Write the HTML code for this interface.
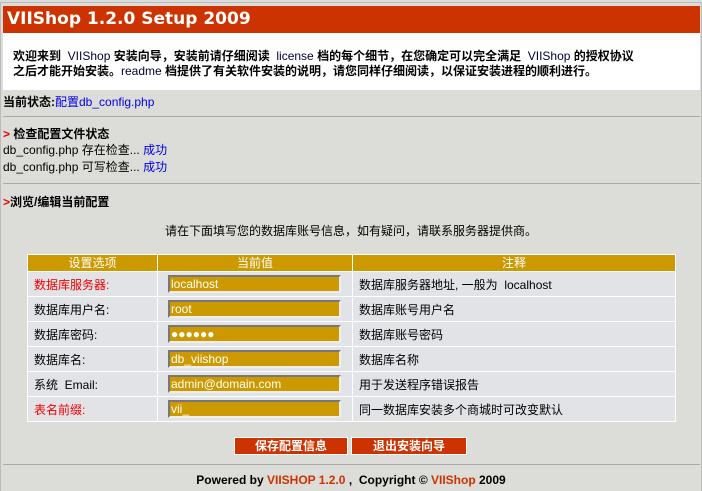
<!DOCTYPE html>
<html><head><meta charset="utf-8"><style>
*{margin:0;padding:0;box-sizing:border-box}
body{width:702px;height:491px;background:#dcdcd8;font-family:"Liberation Sans","Noto Sans CJK SC",sans-serif;font-size:12px;color:#000;position:relative;overflow:hidden}
.frame{position:absolute;left:0;top:2px;width:702px;height:489px;border:1px solid #bbb;border-bottom:none}
.hdr{position:absolute;left:3px;top:6px;width:697px;height:27px;background:#cc3300;color:#fff;font-weight:bold;font-size:17px;line-height:27px;padding-left:4px;font-family:"DejaVu Sans",sans-serif}
.intro{position:absolute;left:3px;top:33px;width:697px;height:57px;background:#fff;font-weight:bold;font-size:12px;line-height:15px;padding:16px 0 0 10px}
.intro .n{font-weight:normal;color:#003}
a{color:#0000ee;text-decoration:none}
.abs{position:absolute}
.hr{position:absolute;left:3px;width:697px;height:1px;background:#aaa}
.red{color:#e00;font-weight:bold}
table{position:absolute;left:27px;top:254px;border-collapse:collapse;width:649px}
td,th{border:1px solid #fff;height:25px;font-size:12px;padding:0}
th{background:#cc9900;color:#fff;font-weight:normal;height:17px;line-height:15px}
td{background:#e2e3e7}
td.l{padding-left:6px}
td.r{padding-left:6px}
.inp{margin-left:10px;width:173px;height:18px;background:#cc9900;border:2px solid;border-color:#777 #eee #eee #777;color:#fff;font-size:12px;line-height:14px;padding-left:1px}
.btn{position:absolute;top:437px;height:18px;background:#cc3300;color:#fff;font-weight:bold;text-align:center;line-height:17px;border:1px solid #fff;font-size:12px}
.foot{position:absolute;left:0;width:702px;top:473px;text-align:center;font-weight:bold;font-size:12px}
.foot span{color:#cc3300}
</style></head><body>
<div class="frame"></div>
<div class="hdr">VIIShop 1.2.0 Setup 2009</div>
<div class="intro">欢迎来到 <span class="n">&nbsp;VIIShop</span> 安装向导，安装前请仔细阅读 <span class="n">&nbsp;license</span> 档的每个细节，在您确定可以完全满足 <span class="n">&nbsp;VIIShop</span> 的授权协议<br>之后才能开始安装。<span class="n">readme</span> 档提供了有关软件安装的说明，请您同样仔细阅读，以保证安装进程的顺利进行。</div>
<div class="abs" style="left:3px;top:93px"><b>当前状态:</b><a>配置db_config.php</a></div>
<div class="hr" style="top:116px"></div>
<div class="abs" style="left:3px;top:125px"><span class="red">&gt;</span> <b>检查配置文件状态</b></div>
<div class="abs" style="left:3px;top:142px;line-height:17px">db_config.php 存在检查... <a>成功</a><br>db_config.php 可写检查... <a>成功</a></div>
<div class="hr" style="top:183px"></div>
<div class="abs" style="left:3px;top:193px"><span class="red">&gt;</span><b>浏览/编辑当前配置</b></div>
<div class="abs" style="left:0;width:702px;top:222px;text-align:center">请在下面填写您的数据库账号信息，如有疑问，请联系服务器提供商。</div>
<table>
<tr><th style="width:130px">设置选项</th><th style="width:195px">当前值</th><th>注释</th></tr>
<tr><td class="l" style="color:#e00">数据库服务器:</td><td><div class="inp">localhost</div></td><td class="r">数据库服务器地址, 一般为 &nbsp;localhost</td></tr>
<tr><td class="l">数据库用户名:</td><td><div class="inp">root</div></td><td class="r">数据库账号用户名</td></tr>
<tr><td class="l">数据库密码:</td><td><div class="inp">●●●●●●</div></td><td class="r">数据库账号密码</td></tr>
<tr><td class="l">数据库名:</td><td><div class="inp">db_viishop</div></td><td class="r">数据库名称</td></tr>
<tr><td class="l">系统 &nbsp;Email:</td><td><div class="inp">admin@domain.com</div></td><td class="r">用于发送程序错误报告</td></tr>
<tr><td class="l" style="color:#e00">表名前缀:</td><td><div class="inp">vii_</div></td><td class="r">同一数据库安装多个商城时可改变默认</td></tr>
</table>
<div class="btn" style="left:234px;width:114px">保存配置信息</div>
<div class="btn" style="left:351px;width:116px">退出安装向导</div>
<div class="hr" style="top:464px"></div>
<div class="foot">Powered by <span>VIISHOP 1.2.0</span> , &nbsp;Copyright © <span>VIIShop</span> 2009</div>
</body></html>
